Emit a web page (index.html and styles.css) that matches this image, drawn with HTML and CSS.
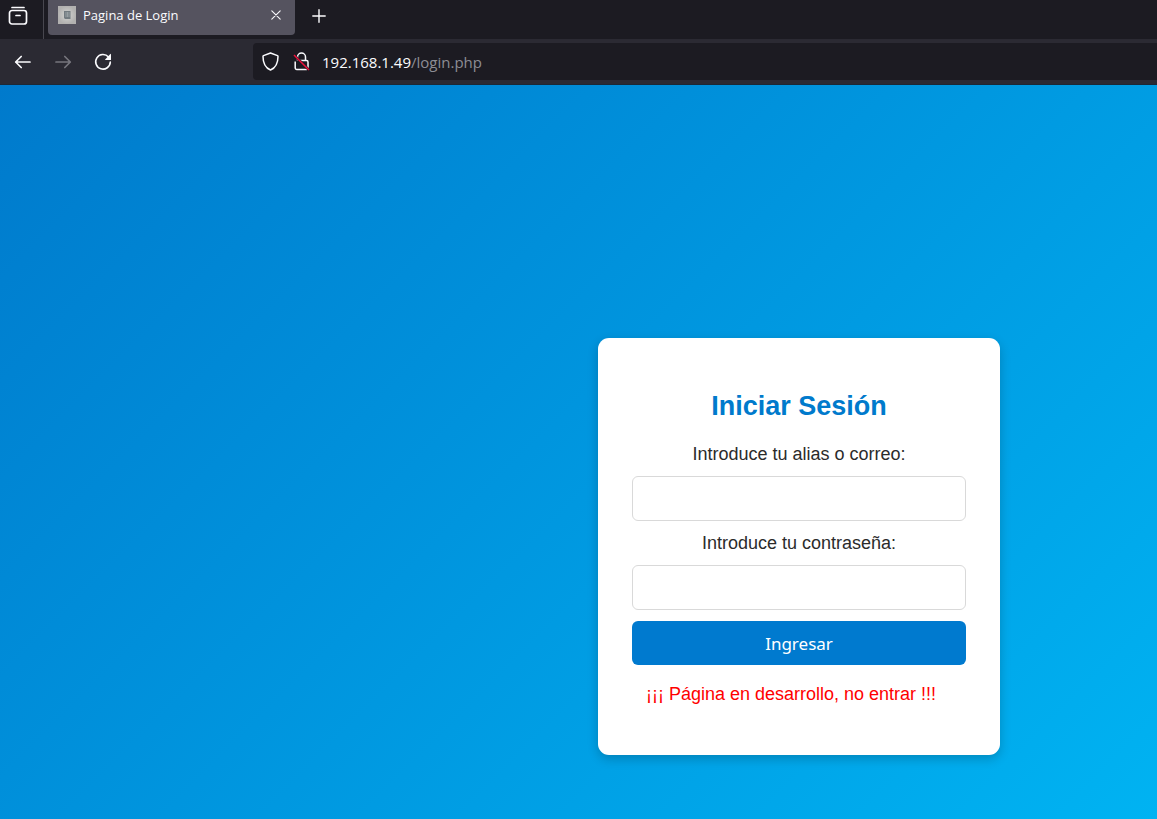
FILE: index.html
```html
<!DOCTYPE html>
<html lang="es">
<head>
<meta charset="utf-8">
<title>Pagina de Login</title>
<link rel="stylesheet" href="styles.css">
</head>
<body>
<header class="browser">
  <div class="tabstrip">
    <button class="icon-button overview" type="button" aria-label="Pestañas">
      <svg width="20" height="20" viewBox="0 0 20 20" fill="none" stroke="#fbfbfe" stroke-width="1.700" stroke-linecap="round" stroke-linejoin="round"><path d="M4 1.500h12"/><rect x="1.500" y="4.500" width="17" height="13.500" rx="2.500"/><path d="M8 9.500h4"/></svg>
    </button>
    <div class="tab">
      <svg class="favicon" width="18" height="18" viewBox="0 0 18 18"><defs><radialGradient id="plate"><stop offset="0" stop-color="#d6d6d4"/><stop offset="1" stop-color="#b2b1b0"/></radialGradient></defs><rect width="18" height="18" fill="url(#plate)"/><path d="M6 5h6.500v8H7l-1-1z" fill="#727a80"/><path d="M8 6v5M9.500 6v5M11 6v5" stroke="#a7afb2" stroke-width=".7"/></svg>
      <span class="tab-title">Pagina de Login</span>
      <button class="icon-button close" type="button" aria-label="Cerrar">
        <svg width="10" height="10" viewBox="0 0 10 10" fill="none" stroke="#fbfbfe" stroke-width="1.1" stroke-linecap="round"><path d="M.8.8l8.400 8.400M9.200.8L.8 9.200"/></svg>
      </button>
    </div>
    <button class="icon-button new-tab" type="button" aria-label="Nueva pestaña">
      <svg width="14" height="14" viewBox="0 0 14 14" fill="none" stroke="#fbfbfe" stroke-width="1.4" stroke-linecap="round"><path d="M7 .8v12.400M.8 7h12.400"/></svg>
    </button>
  </div>
  <div class="toolbar">
    <nav class="nav-buttons">
      <button class="icon-button" type="button" aria-label="Atrás">
        <svg width="18" height="18" viewBox="0 0 18 18" fill="none" stroke="#fbfbfe" stroke-width="1.700" stroke-linecap="round" stroke-linejoin="round"><path d="M16 9H1.700M7.200 3.500L1.700 9l5.500 5.500"/></svg>
      </button>
      <button class="icon-button" type="button" aria-label="Adelante">
        <svg width="18" height="18" viewBox="0 0 18 18" fill="none" stroke="#77767e" stroke-width="1.700" stroke-linecap="round" stroke-linejoin="round"><path d="M2 9h14.300M10.800 3.500L16.300 9l-5.500 5.500"/></svg>
      </button>
      <button class="icon-button" type="button" aria-label="Recargar">
        <svg width="18" height="18" viewBox="0 0 18 18" fill="none"><path d="M14.500 4A7.300 7.300 0 1 0 16.300 9" stroke="#fbfbfe" stroke-width="1.6" stroke-linecap="round"/><path d="M17 1.300v5.400q0 .4-.4.4h-5.200q-.7 0-.2-.6L16.300 1q.7-.5.7.3z" fill="#fbfbfe"/></svg>
      </button>
    </nav>
    <div class="address">
      <svg width="17" height="19" viewBox="0 0 17 19" fill="none" stroke="#fbfbfe" stroke-width="1.5" stroke-linejoin="round"><path d="M8.500 1l7 2.600q.5.2.5.8c0 6.100-2 11.200-7.500 13.600C3 15.600 1 10.500 1 4.400q0-.6.5-.8z"/></svg>
      <svg width="17" height="19" viewBox="0 0 17 19" fill="none" stroke-width="1.500"><path d="M4.500 8.500V5a4 4 0 0 1 8 0v3.500M2.200 9.500v6.600q0 1.400 1.400 1.400h10q1.400 0 1.400-1.400V10q0-1.500-1.500-1.500H6" stroke="#fbfbfe"/><path d="M1 3l15 15" stroke="#1c1b22" stroke-width="2.500"/><path d="M1 3l15 15" stroke="#f0103c"/></svg>
      <span class="url">192.168.1.49<span class="path">/login.php</span></span>
    </div>
  </div>
</header>
<main class="page">
  <form class="card">
    <h1 class="title">Iniciar Sesión</h1>
    <label class="label" for="alias">Introduce tu alias o correo:</label>
    <input class="field" id="alias" type="text">
    <label class="label" for="clave">Introduce tu contraseña:</label>
    <input class="field" id="clave" type="password">
    <button class="submit" type="button">Ingresar</button>
    <p class="notice">¡¡¡ Página en desarrollo, no entrar !!!</p>
  </form>
</main>
</body>
</html>
```

FILE: styles.css
```css
* {
  box-sizing: border-box;
}

body {
  margin: 0;
  min-height: 100vh;
  display: flex;
  flex-direction: column;
  font-family: "Liberation Sans", Arial, sans-serif;
}

.browser {
  font-family: "Open Sans", "Noto Sans", sans-serif;
  color: #fbfbfe;
  background: #2b2a33;
  border-bottom: 1px solid #1c2836;
}

.icon-button {
  display: flex;
  align-items: center;
  justify-content: center;
  padding: 0;
  border: 0;
  background: none;
}

.tabstrip {
  display: flex;
  height: 39px;
  background: #1c1b22;
}

.overview {
  width: 44px;
  padding: 0 7px 8px 0;
  border-right: 1px solid #48474f;
}

.tab {
  display: flex;
  align-items: center;
  width: 247px;
  height: 35px;
  margin-left: 4px;
  padding: 0 14px 6px 10px;
  border-radius: 0 0 4px 4px;
  background: #55535f;
}

.tab-title {
  flex: 1;
  margin-left: 7px;
  font-size: 13px;
}

.new-tab {
  margin-left: 17px;
  padding-bottom: 8px;
}

.toolbar {
  display: flex;
  height: 45px;
}

.nav-buttons {
  display: flex;
  align-items: center;
  gap: 22px;
  width: 253px;
  padding-left: 14px;
}

.address {
  flex: 1;
  display: flex;
  align-items: center;
  margin: 4px 0;
  padding-left: 9px;
  border-radius: 4px 0 0 4px;
  background: #1c1b22;
}

.address svg + svg {
  margin-left: 14px;
}

.url {
  margin-left: 12px;
  font-size: 15px;
}

.path {
  color: #8d8d94;
}

.page {
  flex: 1;
  display: grid;
  grid-template-columns: 598fr 402px 157fr;
  grid-template-rows: 253fr auto 64fr;
  background: linear-gradient(135deg, #007acc, #00b3f2);
}

.card {
  grid-area: 2 / 2;
  display: flex;
  flex-direction: column;
  padding: 52px 34px 49px;
  border-radius: 11px;
  background: #fff;
  box-shadow: 0 4px 11px rgba(0, 0, 0, 0.2);
  text-align: center;
}

.title {
  margin: 0 0 20px;
  font-size: 27px;
  line-height: 32px;
  color: #007acc;
}

.label {
  font-size: 18px;
  line-height: 24px;
  color: #2b2b2b;
}

.field {
  width: 100%;
  height: 45px;
  margin: 10px 0;
  padding: 0 12px;
  border: 1px solid #d9d9d9;
  border-radius: 6px;
  background: #fff;
  font-size: 18px;
}

.submit {
  height: 44px;
  margin-top: 1px;
  padding: 0;
  border: 0;
  border-radius: 6px;
  background: #007acf;
  color: #fff;
  font-family: "Noto Sans", sans-serif;
  font-size: 17px;
}

.notice {
  margin: 17px 16px 0 0;
  font-size: 18px;
  line-height: 24px;
  color: #f00;
}
```
